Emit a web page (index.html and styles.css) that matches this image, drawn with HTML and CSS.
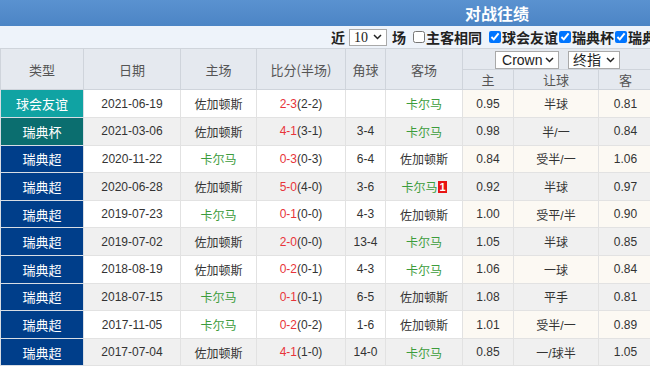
FILE: index.html
```html
<!DOCTYPE html>
<html lang="zh">
<head>
<meta charset="utf-8">
<title>对战往绩</title>
<link rel="stylesheet" href="styles.css">
</head>
<body>
<div class="page">
  <div class="title-bar"><span class="title">对战往绩</span></div>
  <div class="controls">
    <span class="lbl">近</span>
    <span class="sel-wrap sw-num"><select class="sel sel-num"><option>10</option></select><svg class="chev" width="9" height="6" viewBox="0 0 9 6"><path d="M1 1 L4.5 4.5 L8 1" fill="none" stroke="#222" stroke-width="1.5"/></svg></span>
    <span class="lbl">场</span>
    <label class="chk first"><input type="checkbox">主客相同</label>
    <label class="chk second"><input type="checkbox" checked>球会友谊</label><label class="chk"><input type="checkbox" checked>瑞典杯</label><label class="chk"><input type="checkbox" checked>瑞典超</label>
  </div>
  <table class="grid">
    <colgroup>
      <col class="c-type"><col class="c-date"><col class="c-home"><col class="c-score"><col class="c-corner"><col class="c-away"><col class="c-o1"><col class="c-o2"><col class="c-o3">
    </colgroup>
    <thead>
      <tr class="h1">
        <th rowspan="2">类型</th>
        <th rowspan="2">日期</th>
        <th rowspan="2">主场</th>
        <th rowspan="2">比分(半场)</th>
        <th rowspan="2">角球</th>
        <th rowspan="2">客场</th>
        <th colspan="3" class="sel-cell">
          <span class="sel-wrap sw-co"><select class="sel sel-co"><option>Crown</option></select><svg class="chev" width="9" height="6" viewBox="0 0 9 6"><path d="M1 1 L4.5 4.5 L8 1" fill="none" stroke="#222" stroke-width="1.5"/></svg></span>
          <span class="sel-wrap sw-fin"><select class="sel sel-fin"><option>终指</option></select><svg class="chev" width="9" height="6" viewBox="0 0 9 6"><path d="M1 1 L4.5 4.5 L8 1" fill="none" stroke="#222" stroke-width="1.5"/></svg></span>
        </th>
      </tr>
      <tr class="h2">
        <th>主</th><th>让球</th><th>客</th>
      </tr>
    </thead>
    <tbody>
      <tr><td class="t friendly">球会友谊</td><td>2021-06-19</td><td>佐加顿斯</td><td><span class="ft">2-3</span>(2-2)</td><td></td><td class="gr">卡尔马</td><td class="od">0.95</td><td class="od">半球</td><td class="od">0.81</td></tr>
      <tr><td class="t cup">瑞典杯</td><td>2021-03-06</td><td>佐加顿斯</td><td><span class="ft">4-1</span>(3-1)</td><td>3-4</td><td class="gr">卡尔马</td><td class="od">0.98</td><td class="od">半/一</td><td class="od">0.84</td></tr>
      <tr><td class="t league">瑞典超</td><td>2020-11-22</td><td class="gr">卡尔马</td><td><span class="ft">0-3</span>(0-3)</td><td>6-4</td><td>佐加顿斯</td><td class="od">0.84</td><td class="od">受半/一</td><td class="od">1.06</td></tr>
      <tr><td class="t league">瑞典超</td><td>2020-06-28</td><td>佐加顿斯</td><td><span class="ft">5-0</span>(4-0)</td><td>3-6</td><td class="gr">卡尔马<span class="badge">1</span></td><td class="od">0.92</td><td class="od">半球</td><td class="od">0.97</td></tr>
      <tr><td class="t league">瑞典超</td><td>2019-07-23</td><td class="gr">卡尔马</td><td><span class="ft">0-1</span>(0-0)</td><td>4-3</td><td>佐加顿斯</td><td class="od">1.00</td><td class="od">受平/半</td><td class="od">0.90</td></tr>
      <tr><td class="t league">瑞典超</td><td>2019-07-02</td><td>佐加顿斯</td><td><span class="ft">2-0</span>(0-0)</td><td>13-4</td><td class="gr">卡尔马</td><td class="od">1.05</td><td class="od">半球</td><td class="od">0.85</td></tr>
      <tr><td class="t league">瑞典超</td><td>2018-08-19</td><td>佐加顿斯</td><td><span class="ft">0-2</span>(0-1)</td><td>4-3</td><td class="gr">卡尔马</td><td class="od">1.06</td><td class="od">一球</td><td class="od">0.84</td></tr>
      <tr><td class="t league">瑞典超</td><td>2018-07-15</td><td class="gr">卡尔马</td><td><span class="ft">0-1</span>(0-1)</td><td>6-5</td><td>佐加顿斯</td><td class="od">1.08</td><td class="od">平手</td><td class="od">0.81</td></tr>
      <tr><td class="t league">瑞典超</td><td>2017-11-05</td><td class="gr">卡尔马</td><td><span class="ft">0-2</span>(0-2)</td><td>1-6</td><td>佐加顿斯</td><td class="od">1.01</td><td class="od">受半/一</td><td class="od">0.89</td></tr>
      <tr><td class="t league">瑞典超</td><td>2017-07-04</td><td>佐加顿斯</td><td><span class="ft">4-1</span>(1-0)</td><td>14-0</td><td class="gr">卡尔马</td><td class="od">0.85</td><td class="od">一/球半</td><td class="od">1.05</td></tr>
    </tbody>
  </table>
</div>
</body>
</html>
```
FILE: styles.css
```css
html, body {
  margin: 0;
  padding: 0;
  background: #fff;
  overflow: hidden;
}
body {
  font-family: "Liberation Sans", "Noto Sans CJK SC", sans-serif;
  font-size: 12px;
  color: #333;
}
.page {
  width: 652px;
}
.title-bar {
  height: 26px;
  background: linear-gradient(#5a92d0, #4c85c5);
  display: flex;
  align-items: center;
  padding-left: 465px;
  box-sizing: border-box;
}
.title {
  color: #fff;
  font-weight: bold;
  font-size: 16px;
  font-family: "Noto Sans CJK SC", sans-serif;
}
.controls {
  height: 22px;
  background: #eef3fa;
  display: flex;
  align-items: center;
  padding-left: 331px;
  white-space: nowrap;
  font-family: "Noto Sans CJK SC", sans-serif;
  font-size: 14px;
  font-weight: bold;
  color: #222;
  overflow: hidden;
}
.lbl { margin-right: 3px; }

.sel-wrap {
  position: relative;
  display: inline-block;
  vertical-align: middle;
  line-height: 0;
}
.sel {
  -webkit-appearance: none;
  appearance: none;
  border: 1px solid #a9a9a9;
  border-radius: 0;
  background: #fff;
  color: #222;
  margin: 0;
  box-sizing: border-box;
}
.chev {
  position: absolute;
  right: 5px;
  top: 50%;
  margin-top: -3px;
  pointer-events: none;
}
.sw-num { margin: 0 5px 0 1px; }
.sel-num {
  width: 38px;
  height: 17px;
  font-family: "Liberation Serif", serif;
  font-size: 14px;
  padding: 0 0 0 4px;
}
.chk {
  display: inline-flex;
  align-items: center;
}
.chk input {
  margin: 0 1px;
  width: 12px;
  height: 12px;
}
.chk.first { margin-left: 3px; }
.chk.second { margin-left: 6px; }

.grid {
  border-collapse: collapse;
  table-layout: fixed;
  width: 652px;
}
.c-type { width: 83px; }
.c-date { width: 97px; }
.c-home { width: 76px; }
.c-score { width: 89px; }
.c-corner { width: 40px; }
.c-away { width: 77px; }
.c-o1 { width: 51px; }
.c-o2 { width: 85px; }
.c-o3 { width: 54px; }

.grid th {
  background: #e5e9ef;
  color: #555;
  font-weight: normal;
  font-size: 13px;
  font-family: "Noto Sans CJK SC", sans-serif;
  border: 1px solid #cfd4db;
  padding: 0;
  text-align: center;
}
.grid .h1 th { height: 20px; }
.grid .h2 th { height: 19px; }
.sel-cell {
  white-space: nowrap;
}
.sw-co { margin-right: 6px; }
.sel-co, .sel-fin {
  height: 18px;
  font-size: 14px;
  font-family: "Liberation Sans", "Noto Sans CJK SC", sans-serif;
  padding: 0 0 0 6px;
}
.sel-co { width: 64px; }
.sel-fin { width: 52px; padding-left: 4px; }

.grid td {
  height: 26.6px;
  padding: 0;
  text-align: center;
  border: 1px solid #e2e2e2;
  white-space: nowrap;
}
.grid tbody tr:nth-child(even) td { background: #f0f0f0; }
.grid tbody tr:nth-child(odd) td.od { background: #fcf9f3; }
.grid td.t {
  color: #fff;
  font-family: "Noto Sans CJK SC", sans-serif;
  font-size: 13px;
  border-color: #d8dde4;
}
.grid tbody tr td.friendly { background: #10a3a3; }
.grid tbody tr td.cup { background: #0b6e6f; }
.grid tbody tr td.league { background: #003e8a; }
.ft { color: #e8343a; }
.gr { color: #3c9c3c; }
.badge {
  display: inline-block;
  background: #e81414;
  color: #fff;
  font-weight: bold;
  font-size: 11px;
  line-height: 12px;
  padding: 0 1px;
  margin-left: 1px;
  vertical-align: 1px;
}
```
